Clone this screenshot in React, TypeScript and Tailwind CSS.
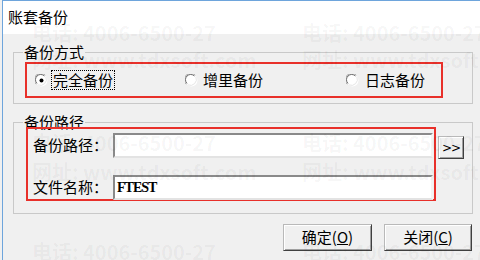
import React from "react";

const CJK = { fontFamily: '"Noto Sans CJK SC", "Noto Sans", sans-serif' };

function Radio({ checked }: { checked?: boolean }) {
  return (
    <svg width="13" height="13" viewBox="0 0 13 13" className="shrink-0">
      <circle cx="6.5" cy="6.5" r="6" fill="#ffffff" />
      <path d="M1.2 10.2 A6 6 0 0 1 10.2 1.2" fill="none" stroke="#a0a0a0" strokeWidth="1" />
      <path d="M2 9.4 A5 5 0 0 1 9.4 2" fill="none" stroke="#6b6b6b" strokeWidth="1" />
      <path d="M10.8 2.8 A6 6 0 0 1 2.8 10.8" fill="none" stroke="#e6e6e6" strokeWidth="1" />
      {checked && <circle cx="6.5" cy="6.5" r="2" fill="#000000" />}
    </svg>
  );
}

function ClassicButton({ children, className }: { children: React.ReactNode; className: string }) {
  return (
    <div
      className={
        "flex items-center justify-center bg-[#f0f0f0] border border-t-[#b9b9b9] border-l-[#b9b9b9] border-r-[#404040] border-b-[#404040] shadow-[inset_1px_1px_0_#ffffff,inset_-1px_-1px_0_#a0a0a0] " +
        className
      }
    >
      {children}
    </div>
  );
}

function Input({ children }: { children?: React.ReactNode }) {
  return (
    <div className="w-[320px] h-[25px] bg-white border-2 border-t-[#8a8a8a] border-l-[#8a8a8a] border-r-[#f4f4f4] border-b-[#e3e3e3] flex items-center pl-[2px]">
      {children}
    </div>
  );
}

function Watermark({ top, left, text }: { top: number; left: number; text: string }) {
  return (
    <div
      className="absolute whitespace-nowrap text-[20px] font-bold leading-[28px] text-black/[0.045]"
      style={{ top, left, ...CJK }}
    >
      {text}
    </div>
  );
}

export default function App() {
  const phone = "电话: 4006-6500-27";
  const url = "网址: www.tdxsoft.com";
  return (
    <div className="relative w-[480px] h-[260px] overflow-hidden bg-[#f0f0f0] text-black" style={CJK}>
      <div className="ml-[2px] w-[478px] h-[260px] border-l border-t border-[#6ea5dc] flex flex-col">
        <div className="h-[33px] bg-white flex items-center pl-[5px] text-[15px]">账套备份</div>
        <div className="flex-1 flex flex-col">
          <fieldset className="mt-[13px] ml-[10px] w-[460px] border border-[#c9c9c9] p-0 m-0">
            <legend className="ml-[9px] px-[1px] leading-[10px] text-[15px]">备份方式</legend>
            <div className="pl-[11px] pt-[5px] pb-[5px]">
              <div className="w-[418px] h-[36px] border-2 border-[#e8302a] flex items-center pl-[8px] text-[15px]">
                <div className="w-[150px] flex items-center">
                  <Radio checked />
                  <span className="ml-[3px] px-[1px] border border-dotted border-black leading-[18px]">完全备份</span>
                </div>
                <div className="w-[161px] flex items-center">
                  <Radio />
                  <span className="ml-[5px] leading-[20px]">增里备份</span>
                </div>
                <div className="flex items-center">
                  <Radio />
                  <span className="ml-[6px] leading-[20px]">日志备份</span>
                </div>
              </div>
            </div>
          </fieldset>

          <fieldset className="mt-[13px] ml-[10px] w-[460px] border border-[#c9c9c9] p-0 m-0">
            <legend className="ml-[9px] px-[1px] leading-[10px] text-[15px]">备份路径</legend>
            <div className="pl-[12px] pb-[12px] flex items-start">
              <div className="w-[410px] h-[74px] border-2 border-[#e8302a] pl-[5px] pt-[4px] flex flex-col text-[15px]">
                <div className="flex items-center">
                  <span className="w-[80px]">备份路径：</span>
                  <Input />
                </div>
                <div className="flex items-center mt-[17px]">
                  <span className="w-[80px]">文件名称：</span>
                  <Input>
                    <span
                      className="text-[14px] tracking-[-1px] leading-[18px] font-semibold"
                      style={{ fontFamily: '"Liberation Serif", serif' }}
                    >
                      FTEST
                    </span>
                  </Input>
                </div>
              </div>
              <ClassicButton className="ml-[2px] mt-[9px] w-[26px] h-[23px]">
                <span className="text-[12px] leading-none tracking-[-1px]" style={{ fontFamily: '"DejaVu Sans", sans-serif' }}>
                  &gt;&gt;
                </span>
              </ClassicButton>
            </div>
          </fieldset>

          <div className="mt-[10px] flex justify-end pr-[8px] gap-[12px] text-[15px]">
            <ClassicButton className="w-[89px] h-[27px]">
              <span>
                确定(<span className="underline">O</span>)
              </span>
            </ClassicButton>
            <ClassicButton className="w-[88px] h-[27px]">
              <span>
                关闭(<span className="underline">C</span>)
              </span>
            </ClassicButton>
          </div>
        </div>
      </div>

      <div className="pointer-events-none absolute inset-0">
        <Watermark top={19} left={32} text={phone} />
        <Watermark top={19} left={302} text={phone} />
        <Watermark top={46} left={32} text={url} />
        <Watermark top={46} left={302} text={url} />
        <Watermark top={129} left={32} text={phone} />
        <Watermark top={129} left={302} text={phone} />
        <Watermark top={158} left={32} text={url} />
        <Watermark top={158} left={302} text={url} />
        <Watermark top={238} left={32} text={phone} />
        <Watermark top={238} left={302} text={phone} />
      </div>
    </div>
  );
}
